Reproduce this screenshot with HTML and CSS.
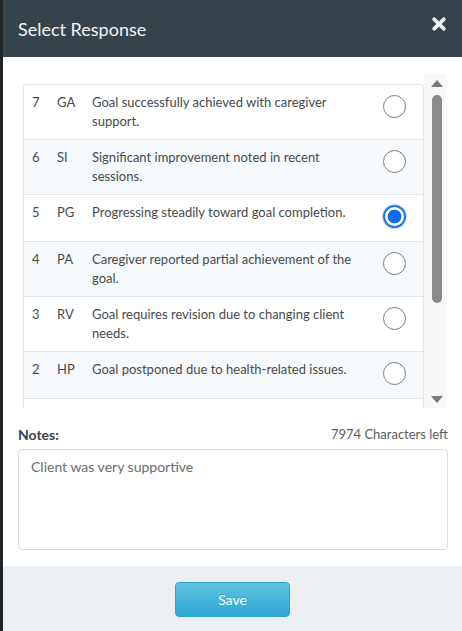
FILE: index.html
```html
<!DOCTYPE html>
<html lang="en">
<head>
<meta charset="utf-8">
<title>Select Response</title>
<link rel="stylesheet" href="styles.css">
</head>
<body>
<div class="dialog">
  <header class="dlg-head">
    <h1 class="dlg-title">Select Response</h1>
    <button class="close" aria-label="Close">
      <svg width="14" height="14" viewBox="0 0 14 14"><path d="M2.2 2.2 L11.8 11.8 M11.8 2.2 L2.2 11.8" stroke="#fff" stroke-width="3.6" stroke-linecap="round"/></svg>
    </button>
  </header>
  <div class="dlg-body">
    <div class="scroll">
      <div class="viewport">
        <ul class="list">
          <li class="row"><span class="num">7</span><span class="code">GA</span><span class="desc">Goal successfully achieved with caregiver support.</span><span class="radio"></span></li>
          <li class="row"><span class="num">6</span><span class="code">SI</span><span class="desc">Significant improvement noted in recent sessions.</span><span class="radio"></span></li>
          <li class="row"><span class="num">5</span><span class="code">PG</span><span class="desc">Progressing steadily toward goal completion.</span><span class="radio checked"></span></li>
          <li class="row"><span class="num">4</span><span class="code">PA</span><span class="desc">Caregiver reported partial achievement of the goal.</span><span class="radio"></span></li>
          <li class="row"><span class="num">3</span><span class="code">RV</span><span class="desc">Goal requires revision due to changing client needs.</span><span class="radio"></span></li>
          <li class="row"><span class="num">2</span><span class="code">HP</span><span class="desc">Goal postponed due to health-related issues.</span><span class="radio"></span></li>
          <li class="row"><span class="num"></span><span class="code"></span><span class="desc"></span><span class="radio"></span></li>
        </ul>
      </div>
      <div class="sbar">
        <div class="sbtn"><svg width="12" height="7" viewBox="0 0 12 7"><polygon points="0,7 6,0 12,7" fill="#7b7b7b"/></svg></div>
        <div class="track"><div class="thumb"></div></div>
        <div class="sbtn"><svg width="12" height="7" viewBox="0 0 12 7"><polygon points="0,0 12,0 6,7" fill="#7b7b7b"/></svg></div>
      </div>
    </div>
    <div class="notes-head">
      <label class="notes-label" for="notes">Notes:</label>
      <span class="chars">7974 Characters left</span>
    </div>
    <textarea id="notes" class="notes">Client was very supportive</textarea>
  </div>
  <footer class="dlg-foot">
    <button class="save">Save</button>
  </footer>
</div>
</body>
</html>
```
FILE: styles.css
```css
html, body {
  margin: 0;
  padding: 0;
  background: #1f2326;
}
body {
  font-family: Lato, "Open Sans", Arial, sans-serif;
  width: 462px;
  height: 631px;
  overflow: hidden;
}
.dialog {
  margin-left: 3px;
  width: 459px;
  height: 631px;
  background: #fff;
  display: flex;
  flex-direction: column;
}
.dlg-head {
  height: 57px;
  background: #37434b;
  display: flex;
  align-items: center;
  justify-content: space-between;
  padding: 0 16px 0 15px;
  box-sizing: border-box;
  flex: none;
}
.dlg-title {
  margin: 0;
  font-size: 18px;
  font-weight: 400;
  color: #f2f4f5;
  line-height: 22px;
  padding-top: 1px;
}
.close {
  align-self: flex-start;
  margin-top: 17px;
  padding: 0;
  border: 0;
  background: none;
  width: 14px;
  height: 14px;
  display: block;
}
.close svg { display: block; }
.dlg-body {
  padding: 17px 15px 16px 15px;
  flex: none;
}
.scroll {
  display: flex;
  height: 334px;
}
.viewport {
  width: 406px;
  overflow: hidden;
  padding: 10px 0 0 5px;
  box-sizing: border-box;
}
.list {
  list-style: none;
  margin: 0;
  padding: 0;
  width: 401px;
  border: 1px solid #e3e6e9;
  border-bottom: 0;
  border-radius: 3px 3px 0 0;
  box-sizing: border-box;
}
.row {
  display: grid;
  grid-template-columns: 25px 35px 1fr 23px;
  column-gap: 0;
  padding: 8px 17px 8px 8px;
  border-bottom: 1px solid #e3e6e9;
  font-size: 13px;
  line-height: 19px;
  color: #474a4d;
}
.row:nth-child(even) { background: #f6fafd; }
.desc { padding-right: 12px; }
.radio {
  width: 23px;
  height: 23px;
  margin: 2px 0 5px;
  border: 1.5px solid #7d7d7d;
  border-radius: 50%;
  box-sizing: border-box;
  background: #fff;
}
.radio.checked {
  border: 2.5px solid #1a74f0;
  box-shadow: 0 0 1px 1px rgba(26, 116, 240, 0.25);
  background: radial-gradient(circle, #0a6cf4 0, #0a6cf4 6.5px, #fff 7.2px);
}
.sbar {
  width: 23px;
  background: #f8f8f8;
  display: flex;
  flex-direction: column;
  align-items: center;
  padding-left: 2px;
  box-sizing: border-box;
}
.sbtn {
  height: 18px;
  display: flex;
  align-items: center;
  justify-content: center;
  flex: none;
}
.sbtn svg { display: block; }
.track {
  flex: 1;
  width: 10px;
  padding-top: 3px;
}
.thumb {
  width: 10px;
  height: 208px;
  border-radius: 5px;
  background: #8a8a8a;
}
.notes-head {
  margin-top: 18px;
  display: flex;
  justify-content: space-between;
  align-items: center;
  height: 17px;
  line-height: 17px;
}
.notes-label {
  font-size: 14px;
  font-weight: 700;
  color: #3d4145;
}
.chars {
  font-size: 13px;
  color: #595c5f;
  margin-right: -1px;
}
.notes {
  display: block;
  margin-top: 6px;
  width: 430px;
  height: 101px;
  box-sizing: border-box;
  border: 1px solid #dcdfe2;
  border-radius: 4px;
  padding: 8px 12px;
  font-family: Lato, "Open Sans", Arial, sans-serif;
  font-size: 14px;
  line-height: 18px;
  color: #6a6d70;
  resize: none;
  outline: none;
  background: #fff;
}
.dlg-foot {
  flex: 1;
  background: #eceff2;
  display: flex;
  justify-content: center;
  align-items: flex-start;
  padding-top: 16px;
  box-sizing: border-box;
}
.save {
  width: 115px;
  height: 35px;
  border: 1px solid #2ea2cf;
  border-radius: 4px;
  background: linear-gradient(#5fc4e2, #2fa7d4);
  color: #fff;
  font-family: Lato, "Open Sans", Arial, sans-serif;
  font-size: 14px;
  text-shadow: 0 -1px 0 rgba(0, 0, 0, 0.15);
  padding: 0;
}
```
